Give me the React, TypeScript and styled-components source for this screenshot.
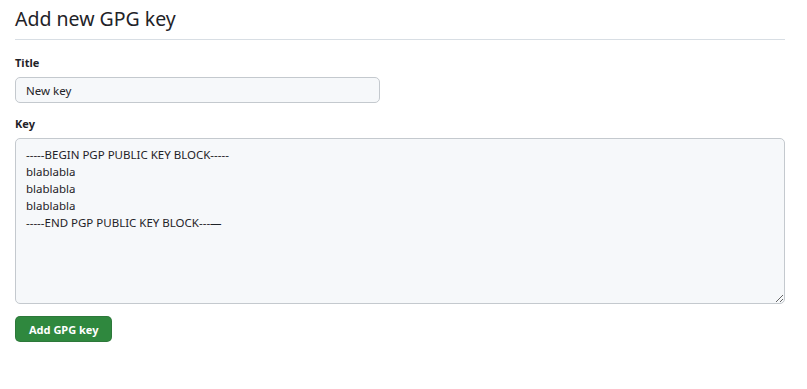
import React from "react";
import styled, { createGlobalStyle } from "styled-components";

const Global = createGlobalStyle`
  html, body { margin: 0; padding: 0; background: #ffffff; }
  body { font-family: "Noto Sans", "Open Sans", sans-serif; color: #1f2328; }
`;

const Page = styled.div`
  width: 807px;
  height: 389px;
  box-sizing: border-box;
  padding: 6px 22px 0 15px;
  display: flex;
  flex-direction: column;
`;

const Header = styled.div`
  border-bottom: 1px solid #d8dee4;
  padding-bottom: 7px;
`;

const Heading = styled.h2`
  margin: 0;
  font-size: 19.5px;
  font-weight: 400;
  line-height: 26px;
  color: #1f2328;
`;

const Form = styled.form`
  display: flex;
  flex-direction: column;
  margin-top: 15px;
`;

const Field = styled.div<{ $gap?: number }>`
  display: flex;
  flex-direction: column;
  margin-bottom: ${(p) => p.$gap ?? 0}px;
`;

const Label = styled.label`
  font-size: 11px;
  font-weight: 700;
  line-height: 16px;
  margin-bottom: 6px;
  color: #1f2328;
`;

const Input = styled.input`
  width: 365px;
  height: 26px;
  box-sizing: border-box;
  border: 1px solid #c4c9ce;
  border-radius: 5px;
  background: #f6f8fa;
  padding: 0 10px;
  font-family: inherit;
  font-size: 11.5px;
  color: #1f2328;
  outline: none;
`;

const TextArea = styled.textarea`
  width: 770px;
  height: 166px;
  box-sizing: border-box;
  border: 1px solid #c4c9ce;
  border-radius: 5px;
  background: #f6f8fa;
  padding: 7px 10px;
  font-family: inherit;
  font-size: 11.5px;
  line-height: 17px;
  color: #1f2328;
  resize: vertical;
  outline: none;
`;

const Button = styled.button`
  align-self: flex-start;
  height: 26px;
  padding: 0 13px;
  border: 1px solid rgba(31, 35, 40, 0.15);
  border-radius: 5px;
  background: #2f883e;
  color: #ffffff;
  font-family: inherit;
  font-size: 11px;
  font-weight: 700;
  cursor: pointer;
  margin-top: 12px;
`;

const keyText = `-----BEGIN PGP PUBLIC KEY BLOCK-----
blablabla
blablabla
blablabla
-----END PGP PUBLIC KEY BLOCK---—`;

export default function App() {
  return (
    <>
      <Global />
      <Page>
        <Header>
          <Heading>Add new GPG key</Heading>
        </Header>
        <Form onSubmit={(e) => e.preventDefault()}>
          <Field $gap={13}>
            <Label htmlFor="title">Title</Label>
            <Input id="title" defaultValue="New key" />
          </Field>
          <Field>
            <Label htmlFor="key">Key</Label>
            <TextArea id="key" defaultValue={keyText} />
          </Field>
          <Button type="submit">Add GPG key</Button>
        </Form>
      </Page>
    </>
  );
}
